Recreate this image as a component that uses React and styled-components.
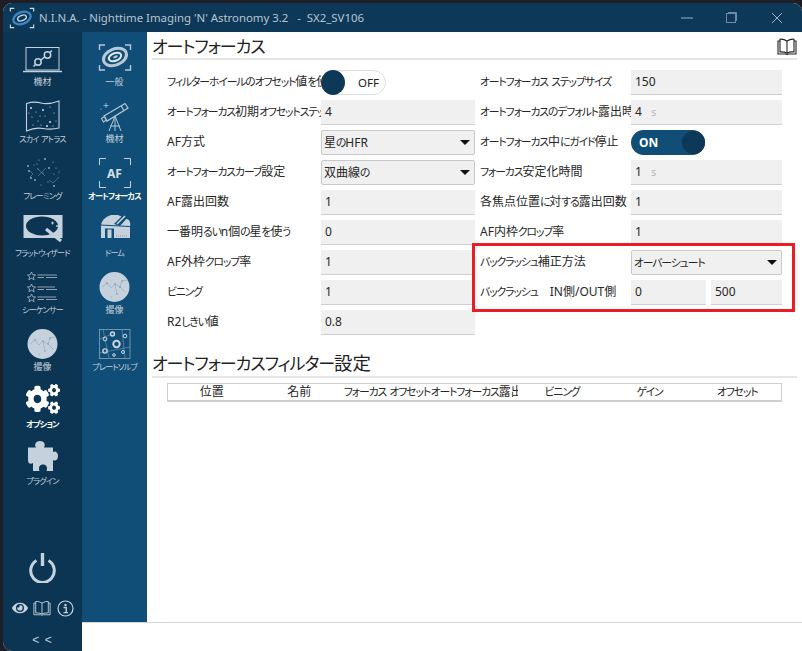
import React from "react";
import styled, { createGlobalStyle } from "styled-components";
import { FaCogs, FaEye } from "react-icons/fa";

const Global = createGlobalStyle`
  html, body { margin: 0; padding: 0; background: #fff; }
  #root { width: 802px; height: 651px; }
  * { box-sizing: border-box; }
`;

const Page = styled.div`
  width: 802px; height: 651px; background: #1d1e26; padding: 3px 0 0 3px; overflow: hidden;
  font-family: "Noto Sans", "Noto Sans CJK JP", sans-serif;
  font-feature-settings: "palt";
  color: #262626;
`;
const Win = styled.div`
  width: 799px; height: 648px; background: #fff; border-radius: 9px 9px 0 9px; overflow: hidden;
  display: flex; flex-direction: column; position: relative;
`;
const TitleBar = styled.div`
  height: 29px; background: #0d3857; color: #b7c5d1; display: flex; align-items: center; flex: none;
`;
const TitleLogo = styled.div` width: 36px; padding-left: 6px; display: flex; flex: none; `;
const TitleText = styled.div`
  font-size: 11.4px; white-space: pre; flex: 1; font-family: "Noto Sans", sans-serif;
`;
const WinBtns = styled.div` display: flex; flex: none; padding-right: 3px; `;
const WinBtn = styled.div` width: 45px; height: 29px; display: flex; align-items: center; justify-content: center; `;
const Body = styled.div` flex: 1; display: flex; min-height: 0; `;
const Rail = styled.div`
  width: 79px; background: #0b3553; display: flex; flex-direction: column; padding-top: 8px; flex: none;
`;
const SubColumn = styled.div` width: 65px; flex: none; display: flex; flex-direction: column; `;
const SubRail = styled.div`
  flex: 1; background: #104e77; display: flex; flex-direction: column; padding-top: 8px;
`;
const SubFoot = styled.div` height: 29px; background: #fff; border-top: 1px solid #d4d4d4; flex: none; `;
const Item = styled.div`
  height: 57px; display: flex; flex-direction: column; align-items: center; flex: none;
`;
const IconBox = styled.div`
  width: 40px; height: 34px; display: flex; align-items: center; justify-content: center; flex: none;
  color: ${p => (p.$active ? "#fff" : "#c5d2de")};
  svg { display: block; overflow: visible; }
`;
const ItemLabel = styled.div`
  font-size: 9px; line-height: 14px; white-space: nowrap; margin-top: 1px;
  color: ${p => (p.$active ? "#fff" : "#c3cfda")};
  font-weight: ${p => (p.$active ? 700 : 400)};
`;
const Kana = styled.span` font-size: .9em; letter-spacing: -.1em; `;
const AFText = styled.span`
  font-size: 12px; font-weight: 700; color: #d8e0e7; font-family: "Noto Sans", sans-serif;
`;
const AFFrame = styled.div`
  width: 32px; height: 30px; position: relative; display: flex; align-items: center; justify-content: center; margin-top: 4px;
  svg { position: absolute; inset: 0; }
`;
const RailFoot = styled.div`
  margin-top: auto; display: flex; flex-direction: column; align-items: center; color: #c5d2de;
`;
const PowerWrap = styled.div` display: flex; margin-bottom: 16px; `;
const MiniIcons = styled.div` display: flex; width: 62px; justify-content: space-between; align-items: center; height: 18px; `;
const Collapse = styled.div` font-size: 12px; line-height: 16px; margin: 15px 0 3px; letter-spacing: 1px; font-family: "Liberation Sans", sans-serif; `;
const Main = styled.div` flex: 1; min-width: 0; display: flex; flex-direction: column; position: relative; `;
const Scroll = styled.div` flex: 1; min-height: 0; padding: 0 5px; `;
const Heading = styled.div`
  height: 28px; border-bottom: 2px solid #e6e6e6; font-size: 18.5px; line-height: 24px; padding-top: ${p => (p.$mt ? 1 : 2)}px;
  display: flex; justify-content: space-between; align-items: center; white-space: nowrap;
  margin-top: ${p => p.$mt || 0}px; color: #222;
  ${Kana} { font-size: .92em; letter-spacing: -.06em; }
`;
const Foot = styled.div` height: 29px; border-top: 1px solid #d4d4d4; flex: none; `;
const Form = styled.div`
  display: grid; grid-template-columns: 308px 302px; column-gap: 5px; margin: 10px 0 0 15px; position: relative;
`;
const Col = styled.div` display: flex; flex-direction: column; gap: 5px; `;
const Field = styled.div`
  display: grid; grid-template-columns: ${p => p.$w}px 1fr; height: 25px; align-items: center;
`;
const Label = styled.div`
  font-size: 12px; line-height: 20px; white-space: nowrap; overflow: hidden; position: relative; top: -1px;
`;
const InputBox = styled.div`
  height: 25px; background: #f0f0f0; border-bottom: 1px solid #cfcfcf; display: flex; align-items: center;
  padding: 0 0 2px 4px; font-size: 12px; gap: 9px; width: 100%;
`;
const Unit = styled.span` color: #b8b8b8; font-size: 11px; `;
const Pair = styled.div` display: grid; grid-template-columns: 75px 71px; column-gap: 5px; `;
const Select = styled.div`
  height: 25px; background: #f0f0f0; border: 1px solid #c9c9c9; border-radius: 2px; display: flex; align-items: center;
  justify-content: space-between; padding: 0 4px 1px 2px; font-size: 12px;
`;
const Arrow = styled.span`
  width: 0; height: 0; border-left: 5px solid transparent; border-right: 5px solid transparent; border-top: 5px solid #111;
`;
const Toggle = styled.div`
  height: 25px; border-radius: 13px; display: flex; align-items: center; position: relative;
  width: ${p => (p.$on ? 74 : 65)}px;
  background: ${p => (p.$on ? "#104e77" : "#fff")};
  border: ${p => (p.$on ? "none" : "1px solid #dedede")};
  color: ${p => (p.$on ? "#fff" : "#222")};
  font-size: ${p => (p.$on ? 12 : 11.5)}px; font-weight: ${p => (p.$on ? 700 : 400)};
  padding-left: ${p => (p.$on ? 8 : 36)}px;
`;
const Knob = styled.span`
  position: absolute; top: ${p => (p.$on ? 1 : -1)}px; width: ${p => (p.$on ? 23 : 24)}px; height: ${p => (p.$on ? 23 : 25)}px; border-radius: 50%;
  background: #0d3857;
  ${p => (p.$on ? "right: 0;" : "left: -1px;")}
`;
const Highlight = styled.div`
  position: absolute; left: 305px; top: 173px; width: 323px; height: 69px; border: 3px solid #ed1c24; pointer-events: none;
`;
const Table = styled.div`
  display: grid; grid-template-columns: repeat(7, 1fr); margin: 5px 15px 0 15px; height: 19px; background: #fff;
  border: 1px solid #cfcfcf; border-bottom-width: 2px; align-items: center;
`;
const Th = styled.div`
  font-size: 12px; line-height: 16px; text-align: center; white-space: nowrap; overflow: hidden;
`;

// The reference's UI font has narrow kana: kana runs are set a little smaller and tighter.
const J = ({ children }) =>
  String(children)
    .split(/([\u3040-\u30FF]+)/)
    .map((s, i) => (i % 2 ? <Kana key={i}>{s}</Kana> : s));

const Galaxy = ({ w = 40, h = 34, core = "#fff", arm = "#c5d2de", bracket = "#c5d2de", top = 4 }) => (
  <svg width={w} height={h} viewBox="0 0 40 34">
    <g fill="none" stroke={bracket} strokeWidth="1.4">
      <path d={`M4.5 ${top + 6}V${top + 1}H10`} />
      <path d={`M30 ${top + 1}H35.5V${top + 6}`} />
      <path d={`M4.5 ${top + 21}V${top + 26}H10`} />
      <path d={`M30 ${top + 26}H35.5V${top + 21}`} />
    </g>
    <g fill="none" transform={`rotate(-22 20 ${top + 13})`}>
      <ellipse cx="20" cy={top + 13} rx="12" ry="8" stroke={arm} strokeWidth="3" />
      <ellipse cx="20" cy={top + 13} rx="6.5" ry="3.8" stroke={core} strokeWidth="2" />
      <ellipse cx="20.5" cy={top + 13} rx="2.5" ry="1.2" fill={arm} />
    </g>
  </svg>
);

const Laptop = () => (
  <svg width="40" height="34" viewBox="0 0 40 34" fill="none" stroke="#c5d2de">
    <rect x="3" y="7.5" width="33" height="22.5" strokeWidth="1" />
    <path d="M0 31.5H39" strokeWidth="1.6" />
    <g strokeWidth="1.5">
      <circle cx="15" cy="22" r="3.2" />
      <circle cx="24.5" cy="15" r="3.2" />
      <path d="M18 20L21.5 17M12.5 24.5L10.5 26.5M27 12.5L29 10.5" />
    </g>
  </svg>
);

const atlasDots = [[8,11],[13,15],[9,20],[15,24],[20,13],[22,19],[27,10],[31,16],[27,25],[33,24],[10,28],[18,28],[24,29],[30,29],[17,19],[6,16]];
const Atlas = () => (
  <svg width="40" height="34" viewBox="0 0 40 34" fill="none" stroke="#c5d2de">
    <path d="M3.5 6.5Q11 4 18 6T36 4V31Q28 33 20 31.5T3.5 34Z" strokeWidth="1.1" />
    {atlasDots.map(([x, y], i) => (
      <circle key={i} cx={x} cy={y} r={i % 4 === 0 ? 1 : 0.55} fill="#d4dde5" stroke="none" />
    ))}
  </svg>
);

const frameDots = [[6,17],[11,11],[16,6],[22,5],[30,8],[33,14],[8,24],[15,15],[20,19],[26,14],[31,20],[35,24],[12,26],[18,31],[25,28],[31,32],[14,10],[36,18],[5,12]];
const Framing = () => (
  <svg width="40" height="34" viewBox="0 0 40 34" fill="none">
    {frameDots.map(([x, y], i) => (
      <circle key={i} cx={x} cy={y} r={i % 3 === 0 ? 0.9 : 0.6} fill="#9fb2c2" />
    ))}
    <path d="M14 14L22 22M23 14L15 22M26 26L30 29L34 25M7 17L10 20L7 23" stroke="#6f8aa0" strokeWidth=".6" />
  </svg>
);

const Wizard = () => (
  <svg width="40" height="34" viewBox="0 0 40 34">
    <rect x="0.5" y="4" width="39" height="23" fill="#c5d2de" />
    <ellipse cx="19" cy="15" rx="16" ry="9.5" fill="#0b3553" />
    <path d="M23 18L38 30" stroke="#c5d2de" strokeWidth="3.2" />
    <path d="M28 12h3M29.5 10.5v3M33 15h2M34 14v2" stroke="#d8e0e7" strokeWidth=".8" />
  </svg>
);

const SeqRow = ({ y, a, b }) => (
  <g fill="none" stroke="#aebfcd" strokeWidth=".8">
    <path d={`M8.5 ${y - 4}l1.2 2.7 2.9.3-2.2 1.9.7 2.8-2.6-1.5-2.6 1.5.7-2.8-2.2-1.9 2.9-.3z`} />
    <path d={`M14.5 ${y - 1}H${a}M14.5 ${y + 1.5}H21M23 ${y + 1.5}H${b}`} />
  </g>
);
const Sequencer = () => (
  <svg width="40" height="34" viewBox="0 0 40 34">
    <SeqRow y={8} a={34} b={34} />
    <SeqRow y={20} a={32} b={34} />
    <SeqRow y={30} a={33} b={34} />
  </svg>
);

const Imaging = () => (
  <svg width="40" height="34" viewBox="0 0 40 34">
    <circle cx="19.5" cy="19" r="15" fill="#c5d2de" />
    <g fill="none" stroke="#8fa4b5" strokeWidth=".6">
      <path d="M7 19L12 15L16 20L20 16L25 19L27 13L33 12" />
      <path d="M20 16L22 26M25 19L30 24" />
    </g>
    <g fill="#6f8aa0">
      <circle cx="12" cy="15" r=".7" /><circle cx="20" cy="16" r=".7" /><circle cx="27" cy="13" r=".7" />
      <circle cx="25" cy="19" r=".7" /><circle cx="22" cy="26" r=".7" /><circle cx="16" cy="29" r=".5" />
    </g>
  </svg>
);

const Telescope = () => (
  <svg width="40" height="34" viewBox="0 0 40 34" fill="none" stroke="#b4c4d1">
    <path d="M9 19L30 6.5L33 11L12 24Z" strokeWidth="1.3" />
    <path d="M6.5 21.5L9.5 19.5L11.5 23L8.5 25Z" strokeWidth="1.1" />
    <path d="M26 8.5L29 14" strokeWidth="1.2" />
    <path d="M20 19L14 34M20 19V34M20 19L26 34M15 29H25" strokeWidth="1" />
    <path d="M11 6v5M8.5 8.5h5" strokeWidth=".8" />
    <circle cx="6" cy="12" r=".6" fill="#b4c4d1" stroke="none" />
  </svg>
);

const Dome = () => (
  <svg width="40" height="34" viewBox="0 0 40 34">
    <path d="M6 27V14Q7 7 16 4H23L34 9Q36 13 35 15V27Z" fill="#c5d2de" />
    <path d="M19 13L29 3L33 6L25 15Z" fill="#104e77" />
    <path d="M22 13L30 5" stroke="#c5d2de" strokeWidth="1.6" />
    <path d="M5 14L35 15.5" stroke="#104e77" strokeWidth="1" />
    <rect x="10" y="17.5" width="9" height="9.5" fill="#104e77" />
    <rect x="12.5" y="18.5" width="4" height="8.5" fill="#c5d2de" />
    <path d="M21 25H33" stroke="#7d99ae" strokeWidth="1" strokeDasharray="1 1" />
  </svg>
);

const Puzzle = () => (
  <svg width="30" height="30" viewBox="0 0 30 30" fill="#c5d2de">
    <path d="M0 6.5H8C6 3 8 0 12 0C16 0 18 3 16 6.5H25V11C27 9.5 30 11 30 15C30 19 27 20.5 25 19V30H18.5C20 26 18 23.5 15 23.5C12 23.5 10 26 11.5 30H5V22C3 23.5 0 23 0 19Z" />
  </svg>
);

const PlateRing = ({ x, y, r, w = 1 }) => <circle cx={x} cy={y} r={r} fill="none" stroke="#cad6e0" strokeWidth={w} />;
const Plate = () => (
  <svg width="40" height="34" viewBox="0 0 40 34" fill="none">
    <rect x="4.5" y="4.5" width="30.5" height="29" stroke="#8aa3b6" strokeWidth=".8" />
    <path d="M4.5 28L35 22M27 4.5L30 33.5M8 4.5L14 33M4.5 14L20 8" stroke="#7e99ad" strokeWidth=".6" />
    <PlateRing x={21.5} y={19} r={3.2} w={2} />
    <PlateRing x={17.5} y={9} r={2} w={1.4} />
    <PlateRing x={30} y={11} r={1.8} />
    <PlateRing x={10} y={14} r={1.9} />
    <PlateRing x={10} y={26} r={2.1} w={1.4} />
    <PlateRing x={19} y={30} r={1.3} />
    <PlateRing x={28} y={27} r={1.5} />
  </svg>
);

const Power = () => (
  <svg width="27" height="30" viewBox="0 0 27 30" fill="none" stroke="#c5d2de">
    <path d="M7.5 7.5A11.8 11.8 0 1 0 19.5 7.5" strokeWidth="3" />
    <path d="M13.5 0V13" strokeWidth="3.4" />
  </svg>
);
const Book = ({ color = "#c5d2de", w = 18, h = 16, sw = 1 }) => (
  <svg width={w} height={h} viewBox="0 0 20 17" fill="none" stroke={color} strokeWidth={sw}>
    <path d="M10 3Q6.5 .8 3 1.2V14Q7 13.6 10 15.2Q13 13.6 17 14V1.2Q13.5 .8 10 3ZM10 3V15.2" />
    <path d="M3 3H1V16H8.5L10 16.5L11.5 16H19V3H17" />
  </svg>
);
const Info = () => (
  <svg width="17" height="17" viewBox="0 0 17 17" fill="none" stroke="#c5d2de">
    <circle cx="8.5" cy="8.5" r="7.5" strokeWidth="1.2" />
    <circle cx="8.5" cy="4.9" r="1.2" fill="#c5d2de" stroke="none" />
    <path d="M6.5 7.5H9.2V12.4M6.5 12.6H11" strokeWidth="1.4" />
  </svg>
);

const rail = [
  { label: "機材", icon: <Laptop /> },
  { label: "スカイ アトラス", icon: <Atlas /> },
  { label: "フレーミング", icon: <Framing /> },
  { label: "フラットウィザード", icon: <Wizard /> },
  { label: "シーケンサー", icon: <Sequencer /> },
  { label: "撮像", icon: <Imaging /> },
  { label: "オプション", icon: <FaCogs style={{ width: 34, height: 30 }} preserveAspectRatio="none" />, active: true },
  { label: "プラグイン", icon: <Puzzle /> },
];
const sub = [
  { label: "一般", icon: <Galaxy arm="#b9c8d4" core="#e1e8ee" bracket="#b9c8d4" /> },
  { label: "機材", icon: <Telescope /> },
  {
    label: "オートフォーカス",
    active: true,
    icon: (
      <AFFrame>
        <svg width="32" height="30" viewBox="0 0 32 30" fill="none" stroke="#c5d2de" strokeWidth="1">
          <path d="M.5 7V.5H7M25 .5H31.5V7M.5 23V29.5H7M25 29.5H31.5V23" />
        </svg>
        <AFText>AF</AFText>
      </AFFrame>
    ),
  },
  { label: "ドーム", icon: <Dome /> },
  { label: "撮像", icon: <Imaging /> },
  { label: "プレートソルブ", icon: <Plate /> },
];

const Input = ({ v, unit }) => (
  <InputBox>
    <span>{v}</span>
    {unit && <Unit>{unit}</Unit>}
  </InputBox>
);
const Sel = ({ v }) => (
  <Select>
    <span><J>{v}</J></span>
    <Arrow />
  </Select>
);
const F = ({ w, label, children }) => (
  <Field $w={w}>
    <Label><J>{label}</J></Label>
    {children}
  </Field>
);

const columns = ["位置", "名前", "フォーカス オフセット", "オートフォーカス露出", "ビニング", "ゲイン", "オフセット"];

export default function App() {
  return (
    <Page>
      <Global />
      <Win>
        <TitleBar>
          <TitleLogo>
            <svg width="26" height="22" viewBox="0 0 40 34">
              <g fill="none" stroke="#d3dde5" strokeWidth="1.8">
                <path d="M2 7V2H8M32 2H38V7M2 27V32H8M32 32H38V27" />
              </g>
              <g fill="none" transform="rotate(-22 20 17)">
                <ellipse cx="20" cy="17" rx="14" ry="9" stroke="#3f87c4" strokeWidth="3.6" />
                <ellipse cx="20" cy="17" rx="7" ry="4" stroke="#c9dcec" strokeWidth="2.2" />
              </g>
            </svg>
          </TitleLogo>
          <TitleText>{"N.I.N.A. - Nighttime Imaging 'N' Astronomy 3.2   -  SX2_SV106"}</TitleText>
          <WinBtns>
            <WinBtn>
              <svg width="12" height="12" viewBox="0 0 12 12" stroke="#9fb2c2"><path d="M0 6H12" /></svg>
            </WinBtn>
            <WinBtn>
              <svg width="11" height="11" viewBox="0 0 11 11" fill="none" stroke="#6f8aa0"><rect x=".5" y="1.5" width="9" height="9" /><path d="M2 .5H10.5V9" /></svg>
            </WinBtn>
            <WinBtn>
              <svg width="12" height="12" viewBox="0 0 12 12" stroke="#9fb2c2"><path d="M1 1L11 11M11 1L1 11" /></svg>
            </WinBtn>
          </WinBtns>
        </TitleBar>
        <Body>
          <Rail>
            {rail.map(it => (
              <Item key={it.label}>
                <IconBox $active={it.active}>{it.icon}</IconBox>
                <ItemLabel $active={it.active}><J>{it.label}</J></ItemLabel>
              </Item>
            ))}
            <RailFoot>
              <PowerWrap><Power /></PowerWrap>
              <MiniIcons>
                <FaEye size={16} />
                <Book />
                <Info />
              </MiniIcons>
              <Collapse>{"< <"}</Collapse>
            </RailFoot>
          </Rail>
          <SubColumn>
            <SubRail>
              {sub.map(it => (
                <Item key={it.label}>
                  <IconBox $active={it.active}>{it.icon}</IconBox>
                  <ItemLabel $active={it.active}><J>{it.label}</J></ItemLabel>
                </Item>
              ))}
            </SubRail>
            <SubFoot />
          </SubColumn>
          <Main>
            <Scroll>
              <Heading>
                <span><J>オートフォーカス</J></span>
                <Book color="#222" w={20} h={17} sw={1.1} />
              </Heading>
              <Form>
                <Col>
                  <F w={154} label="フィルターホイールのオフセット値を使用">
                    <Toggle><Knob />OFF</Toggle>
                  </F>
                  <F w={154} label="オートフォーカス初期オフセットステップ"><Input v="4" /></F>
                  <F w={154} label="AF方式"><Sel v="星のHFR" /></F>
                  <F w={154} label="オートフォーカスカーブ設定"><Sel v="双曲線の" /></F>
                  <F w={154} label="AF露出回数"><Input v="1" /></F>
                  <F w={154} label="一番明るいn個の星を使う"><Input v="0" /></F>
                  <F w={154} label="AF外枠クロップ率"><Input v="1" /></F>
                  <F w={154} label="ビニング"><Input v="1" /></F>
                  <F w={154} label="R2しきい値"><Input v="0.8" /></F>
                </Col>
                <Col>
                  <F w={151} label="オートフォーカス ステップサイズ"><Input v="150" /></F>
                  <F w={151} label="オートフォーカスのデフォルト露出時間"><Input v="4" unit="s" /></F>
                  <F w={151} label="オートフォーカス中にガイド停止">
                    <Toggle $on>ON<Knob $on /></Toggle>
                  </F>
                  <F w={151} label="フォーカス安定化時間"><Input v="1" unit="s" /></F>
                  <F w={151} label="各焦点位置に対する露出回数"><Input v="1" /></F>
                  <F w={151} label="AF内枠クロップ率"><Input v="1" /></F>
                  <F w={151} label="バックラッシュ補正方法"><Sel v="オーバーシュート" /></F>
                  <F w={151} label="バックラッシュ　IN側/OUT側">
                    <Pair>
                      <Input v="0" />
                      <Input v="500" />
                    </Pair>
                  </F>
                </Col>
                <Highlight />
              </Form>
              <Heading $mt={15}><span><J>オートフォーカスフィルター設定</J></span></Heading>
              <Table>
                {columns.map(c => <Th key={c}><J>{c}</J></Th>)}
              </Table>
            </Scroll>
            <Foot />
          </Main>
        </Body>
      </Win>
    </Page>
  );
}
